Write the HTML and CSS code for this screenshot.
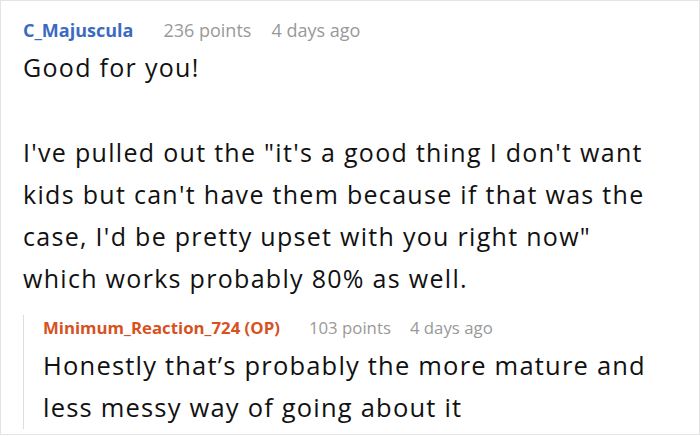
FILE: index.html
```html
<!DOCTYPE html>
<html>
<head>
<meta charset="utf-8">
<link rel="stylesheet" href="styles.css">
</head>
<body>
<div class="frame">
  <div class="comment">
    <div class="meta">
      <span class="author">C_Majuscula</span>
      <span class="info">236 points</span>
      <span class="info">4 days ago</span>
    </div>
    <div class="body">Good for you!<br><br>I've pulled out the "it's a good thing I don't want kids but can't have them because if that was the case, I'd be pretty upset with you right now"<br>which works probably 80% as well.</div>
    <div class="reply">
      <div class="meta small">
        <span class="author op">Minimum_Reaction_724 (OP)</span>
        <span class="info">103 points</span>
        <span class="info">4 days ago</span>
      </div>
      <div class="body reply-body">Honestly that’s probably the more mature and less messy way of going about it</div>
    </div>
  </div>
</div>
</body>
</html>
```

FILE: styles.css
```css
html, body {
  margin: 0;
  padding: 0;
  background: #fff;
}
.frame {
  width: 700px;
  height: 435px;
  box-sizing: border-box;
  border: 1px solid #e4e4e4;
  overflow: hidden;
  font-family: "Open Sans", "Noto Sans", sans-serif;
  color: #111;
}
.comment {
  padding: 16px 0 0 22px;
}
.meta {
  display: flex;
  gap: 20px;
  font-size: 18px;
  line-height: 26px;
  color: #999;
}
.author {
  font-weight: 700;
  color: #3b6bbf;
  margin-right: 10px;
}
.body {
  margin-top: 3px;
  font-size: 25px;
  line-height: 42.3px;
  letter-spacing: 1.3px;
  width: 660px;
}
.reply {
  margin-top: 25px;
  border-left: 1px solid #dedede;
  padding-left: 19px;
}
.meta.small {
  margin-top: -10px;
  font-size: 16.8px;
  gap: 19px;
}
.author.op {
  color: #d6521f;
}
.reply-body {
  font-size: 25.5px;
  line-height: 42.5px;
  letter-spacing: 1.2px;
  width: 640px;
}
```
